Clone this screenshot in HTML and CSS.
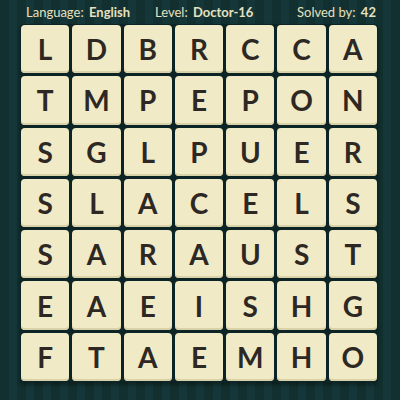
FILE: index.html
```html
<!DOCTYPE html>
<html>
<head>
<meta charset="utf-8">
<link rel="stylesheet" href="styles.css">
</head>
<body>
<div class="page">
  <div class="header">
    <span class="item">Language: <b>English</b></span>
    <span class="item">Level: <b>Doctor-16</b></span>
    <span class="item">Solved by: <b>42</b></span>
  </div>
  <div class="board">
    <div class="tile">L</div><div class="tile">D</div><div class="tile">B</div><div class="tile">R</div><div class="tile">C</div><div class="tile">C</div><div class="tile">A</div>
    <div class="tile">T</div><div class="tile">M</div><div class="tile">P</div><div class="tile">E</div><div class="tile">P</div><div class="tile">O</div><div class="tile">N</div>
    <div class="tile">S</div><div class="tile">G</div><div class="tile">L</div><div class="tile">P</div><div class="tile">U</div><div class="tile">E</div><div class="tile">R</div>
    <div class="tile">S</div><div class="tile">L</div><div class="tile">A</div><div class="tile">C</div><div class="tile">E</div><div class="tile">L</div><div class="tile">S</div>
    <div class="tile">S</div><div class="tile">A</div><div class="tile">R</div><div class="tile">A</div><div class="tile">U</div><div class="tile">S</div><div class="tile">T</div>
    <div class="tile">E</div><div class="tile">A</div><div class="tile">E</div><div class="tile">I</div><div class="tile">S</div><div class="tile">H</div><div class="tile">G</div>
    <div class="tile">F</div><div class="tile">T</div><div class="tile">A</div><div class="tile">E</div><div class="tile">M</div><div class="tile">H</div><div class="tile">O</div>
  </div>
</div>
</body>
</html>
```
FILE: styles.css
```css
html, body {
  margin: 0;
  padding: 0;
}
body {
  width: 400px;
  height: 400px;
  overflow: hidden;
  background-color: #133134;
  background-image: repeating-linear-gradient(90deg, #12302f 0px, #12302f 9px, #163739 9px, #163739 17px);
  font-family: "Lato", "Open Sans", sans-serif;
}
.page {
  width: 400px;
  height: 400px;
  display: flex;
  flex-direction: column;
}
.header {
  height: 24px;
  display: grid;
  grid-template-columns: 129px 142px 1fr;
  align-items: center;
  padding: 0 0 0 26px;
  color: #e6e0bf;
  font-size: 13px;
  box-sizing: border-box;
  white-space: nowrap;
}
.header b {
  font-weight: 700;
  margin-left: 2px;
}
.board {
  margin-left: 20px;
  width: 358px;
  height: 358px;
  display: grid;
  grid-template-columns: repeat(7, 1fr);
  grid-template-rows: repeat(7, 1fr);
  gap: 3px;
  padding: 1px;
  box-sizing: border-box;
  background: #0d2426;
  border-radius: 4px;
  box-shadow: 0 3px 4px rgba(0, 0, 0, 0.35);
}
.tile {
  background: #f1eac6;
  border-radius: 4px;
  box-shadow: inset 0 -2px 0 #d9d1a8;
  display: flex;
  align-items: center;
  justify-content: center;
  color: #2d2823;
  font-size: 28px;
  font-weight: 700;
}
```
